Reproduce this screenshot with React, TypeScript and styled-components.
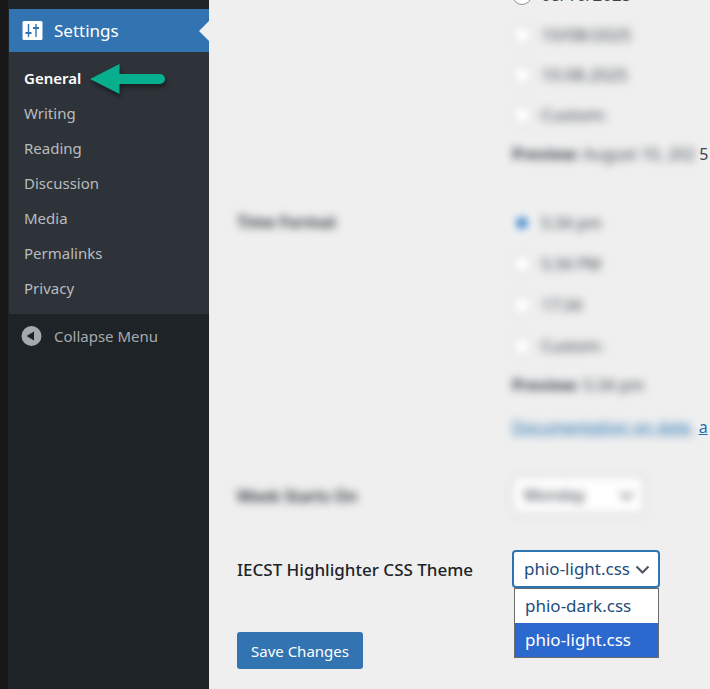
import React, { useState } from "react";
import styled, { createGlobalStyle, css } from "styled-components";

const GlobalStyle = createGlobalStyle`
  *, *::before, *::after { box-sizing: border-box; }
  body {
    margin: 0;
    background: #efefef;
    color: #3c434a;
    font-family: "Noto Sans", "Segoe UI", sans-serif;
    font-size: 16px;
    line-height: 24px;
  }
`;

const Page = styled.div`
  display: flex;
  min-height: 100vh;
  overflow: hidden;
`;

const Sidebar = styled.nav`
  flex: 0 0 209px;
  padding-top: 9px;
  border-left: 8px solid #171717;
  padding-left: 1px;
  background: #1e2327;
`;

const MenuHeading = styled.a`
  position: relative;
  display: flex;
  align-items: center;
  gap: 11px;
  height: 43px;
  padding-left: 13px;
  background: #3273b1;
  color: #fff;
  font-size: 17px;
  text-decoration: none;

  &::after {
    content: "";
    position: absolute;
    right: 0;
    top: 12px;
    border: 10px solid transparent;
    border-left-width: 0;
    border-right-color: #efefef;
  }
`;

const Submenu = styled.ul`
  margin: 0;
  padding: 8px 0 9px;
  background: #2e3339;
  list-style: none;
`;

const SubmenuItem = styled.li`
  display: flex;
  align-items: center;
  gap: 9px;
  height: 35px;
  padding-left: 15px;
`;

const SubmenuLink = styled.a<{ $current?: boolean }>`
  color: ${(p) => (p.$current ? "#fff" : "#b9bcbf")};
  font-size: 15px;
  font-weight: ${(p) => (p.$current ? 600 : 400)};
  text-decoration: none;
`;

const Arrow = styled.svg`
  flex: none;
  overflow: visible;
  filter: drop-shadow(1px 3px 2px rgba(0, 0, 0, 0.45));
`;

const CollapseButton = styled.button`
  display: flex;
  align-items: center;
  gap: 12px;
  width: 100%;
  height: 44px;
  padding: 0 0 0 12px;
  border: 0;
  background: none;
  color: #a7aaad;
  font: inherit;
  font-size: 15px;
`;

const Main = styled.main`
  flex: 1;
  min-width: 0;
  padding: 0 0 20px 28px;
  overflow: hidden;
`;

const SettingsForm = styled.form`
  margin-top: -25px;
`;

const FormRow = styled.div<{ $gap: number }>`
  display: grid;
  grid-template-columns: 275px minmax(0, 1fr);
  margin-bottom: ${(p) => p.$gap}px;
`;

const blurred = css`
  filter: blur(4px);
`;

const Heading = styled.div<{ $blur?: boolean }>`
  display: flex;
  align-items: center;
  height: 40px;
  color: #1d2327;
  font-size: ${(p) => (p.$blur ? 16 : 17)}px;
  font-weight: ${(p) => (p.$blur ? 600 : 500)};
  white-space: nowrap;
  ${(p) => p.$blur && blurred}
`;

const RadioRow = styled.label<{ $blur?: boolean }>`
  display: flex;
  align-items: center;
  gap: 9px;
  width: max-content;
  height: 41px;
  ${(p) => p.$blur && blurred}
`;

const DateRow = styled(RadioRow)`
  height: 40px;
  font-size: 17px;
`;

const Radio = styled.input<{ $soft?: boolean }>`
  appearance: none;
  width: 20px;
  height: 20px;
  margin: 0;
  border: 1px solid ${(p) => (p.$soft ? "#b4b7ba" : "#8c8f94")};
  border-radius: 50%;
  background: #fff;

  &:checked {
    border: 4px solid #fff;
    background: #2f78bd;
  }
`;

const Preview = styled.div`
  display: flex;
  align-items: center;
  height: 38px;
  white-space: pre;
`;

const DocLine = styled.div`
  display: flex;
  align-items: center;
  height: 46px;
  white-space: pre;
`;

const DocLink = styled.a`
  color: #2271b1;
`;

const Blur = styled.span`
  display: inline-block;
  padding-right: 4px;
  text-decoration: inherit;
  ${blurred}
`;

const SelectBox = styled.div<{ $blur?: boolean; $wide?: boolean }>`
  position: relative;
  width: ${(p) => (p.$wide ? 148 : 132)}px;
  height: 38px;
  ${(p) => p.$blur && blurred}
`;

const Select = styled.select<{ $open?: boolean }>`
  appearance: none;
  display: block;
  width: 100%;
  height: 38px;
  padding: 0 24px 0 ${(p) => (p.$open ? 10 : 11)}px;
  border: ${(p) => (p.$open ? "2px solid #2e74b2" : "1px solid #a9abae")};
  border-radius: 4px;
  outline: 0;
  background: #fff;
  color: ${(p) => (p.$open ? "#1c4d7c" : "#2c3338")};
  font: inherit;
  font-size: ${(p) => (p.$open ? 17 : 16)}px;
`;

const Chevron = styled.svg`
  position: absolute;
  right: 10px;
  top: 15px;
  pointer-events: none;
`;

const Options = styled.ul`
  position: absolute;
  left: 2px;
  right: 1px;
  top: 100%;
  z-index: 1;
  margin: 0;
  padding: 0;
  border: 1px solid #6b6b6b;
  background: #fff;
  font-size: 17px;
  list-style: none;
`;

const Option = styled.li<{ $selected: boolean }>`
  height: 34px;
  padding: 5px 10px;
  background: ${(p) => (p.$selected ? "#2b69cf" : "#fff")};
  color: ${(p) => (p.$selected ? "#fff" : "#1c4d7c")};
  white-space: nowrap;
  cursor: default;
`;

const SaveButton = styled.button`
  height: 37px;
  padding: 0 14px;
  border: 0;
  border-radius: 3px;
  background: #3273b1;
  color: #fff;
  font: inherit;
  font-size: 15px;
  white-space: nowrap;
`;

const pages = ["General", "Writing", "Reading", "Discussion", "Media", "Permalinks", "Privacy"];
const dates = ["08/10/2025", "10/08/2025", "10.08.2025", "Custom:"];
const times = ["5:34 pm", "5:34 PM", "17:34", "Custom:"];
const themes = ["phio-dark.css", "phio-light.css"];

const DownMark = () => (
  <Chevron width="15" height="10" viewBox="0 0 15 10" aria-hidden="true">
    <path d="M1.5 1.5 7.5 7.5 13.5 1.5" fill="none" stroke="#50575e" strokeWidth="2.2" />
  </Chevron>
);

export default function App() {
  const [theme, setTheme] = useState("phio-light.css");

  return (
    <>
      <GlobalStyle />
      <Page>
        <Sidebar aria-label="Admin menu">
          <MenuHeading href="#settings">
            <svg width="21" height="19" viewBox="0 0 21 19" aria-hidden="true">
              <rect x="0.5" y="0" width="20" height="19" rx="1.5" fill="#fff" />
              <path
                d="M6.5 3v13M14 3v13"
                fill="none"
                stroke="#3273b1"
                strokeWidth="1.4"
              />
              <path
                d="M3.5 12h6M11 7h6"
                fill="none"
                stroke="#3273b1"
                strokeWidth="2"
              />
            </svg>
            Settings
          </MenuHeading>
          <Submenu>
            {pages.map((name, i) => (
              <SubmenuItem key={name}>
                <SubmenuLink
                  href={`#${name.toLowerCase()}`}
                  $current={i === 0}
                  aria-current={i === 0 ? "page" : undefined}
                >
                  {name}
                </SubmenuLink>
                {i === 0 && (
                  <Arrow width="75" height="30" viewBox="0 0 75 30" aria-hidden="true">
                    <path d="M0 16 29.500 1v10H70a5 5 0 0 1 0 10H29.500v10z" fill="#08af8f" />
                  </Arrow>
                )}
              </SubmenuItem>
            ))}
          </Submenu>
          <CollapseButton type="button">
            <svg width="21" height="21" viewBox="0 0 21 21" aria-hidden="true">
              <circle cx="10.500" cy="10" r="10" fill="#a7aaad" />
              <path d="M5.500 10 13 5.500v9z" fill="#1e2327" />
            </svg>
            Collapse Menu
          </CollapseButton>
        </Sidebar>

        <Main>
          <SettingsForm onSubmit={(e) => e.preventDefault()}>
            <FormRow $gap={29}>
              <div />
              <div role="radiogroup" aria-label="Date Format">
                {dates.map((d, i) => (
                  <DateRow key={d} $blur={i > 0}>
                    <Radio type="radio" name="date" value={d} $soft={i > 0} />
                    {d}
                  </DateRow>
                ))}
                <Preview>
                  <Blur>
                    <strong>Preview:</strong> August 10, 202
                  </Blur>
                  5
                </Preview>
              </div>
            </FormRow>

            <FormRow $gap={26}>
              <Heading $blur id="time-heading">Time Format</Heading>
              <div role="radiogroup" aria-labelledby="time-heading">
                {times.map((t, i) => (
                  <RadioRow key={t} $blur>
                    <Radio type="radio" name="time" value={t} $soft defaultChecked={i === 0} />
                    {t}
                  </RadioRow>
                ))}
                <Preview>
                  <Blur>
                    <strong>Preview:</strong> 5:34 pm
                  </Blur>
                </Preview>
                <DocLine>
                  <DocLink href="#documentation">
                    <Blur>Documentation on date </Blur>a
                  </DocLink>
                </DocLine>
              </div>
            </FormRow>

            <FormRow $gap={34}>
              <Heading $blur as="label" htmlFor="week">Week Starts On</Heading>
              <SelectBox $blur>
                <Select id="week" defaultValue="Monday">
                  <option>Monday</option>
                  <option>Sunday</option>
                </Select>
                <DownMark />
              </SelectBox>
            </FormRow>

            <FormRow $gap={42}>
              <Heading as="label" htmlFor="theme">IECST Highlighter CSS Theme</Heading>
              <SelectBox $wide>
                <Select id="theme" $open value={theme} onChange={(e) => setTheme(e.target.value)}>
                  {themes.map((t) => (
                    <option key={t}>{t}</option>
                  ))}
                </Select>
                <DownMark />
                <Options role="listbox" aria-label="Themes">
                  {themes.map((t) => (
                    <Option
                      key={t}
                      role="option"
                      aria-selected={t === theme}
                      $selected={t === theme}
                      onClick={() => setTheme(t)}
                    >
                      {t}
                    </Option>
                  ))}
                </Options>
              </SelectBox>
            </FormRow>

            <SaveButton type="submit">Save Changes</SaveButton>
          </SettingsForm>
        </Main>
      </Page>
    </>
  );
}
